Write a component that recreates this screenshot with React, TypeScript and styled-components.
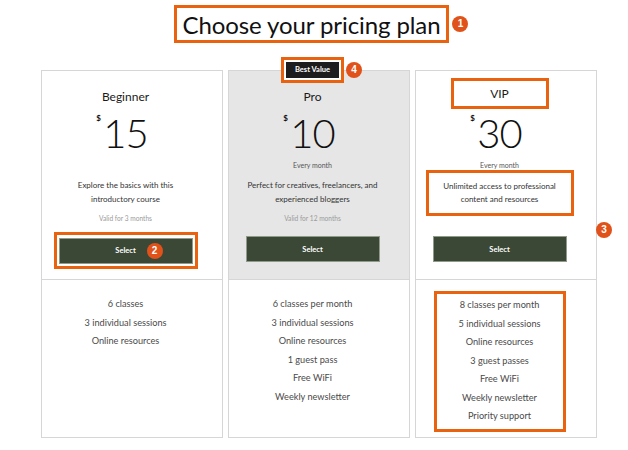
import styled, { createGlobalStyle } from "styled-components";

const GlobalStyle = createGlobalStyle`
  html, body {
    margin: 0;
    padding: 0;
    background: #ffffff;
  }
  body {
    font-family: "Lato", "Liberation Sans", sans-serif;
    color: #1a1a1a;
  }
`;

const Page = styled.div`
  width: 628px;
  height: 450px;
  position: relative;
  overflow: hidden;
  background: #fff;
`;

const TitleRow = styled.div`
  display: flex;
  justify-content: center;
  padding: 5px 5px 0 0;
  height: 70px;
  box-sizing: border-box;
`;

const Highlight = styled.div`
  position: relative;
  border: 3px solid #e8620f;
  box-sizing: border-box;
`;

const TitleBox = styled(Highlight)`
  height: 38px;
  padding: 0 6px;
  display: flex;
  align-items: center;
`;

const Title = styled.h1`
  margin: 0;
  font-family: "Lato", sans-serif;
  font-weight: 400;
  font-size: 24px;
  color: #111;
  letter-spacing: -0.1px;
`;

const Marker = styled.span<{ $top: number; $left?: number; $right?: number }>`
  position: absolute;
  top: ${(p) => p.$top}px;
  ${(p) => (p.$right !== undefined ? `right: ${p.$right}px;` : `left: ${p.$left}px;`)}
  width: 16px;
  height: 16px;
  border-radius: 50%;
  background: #e0521a;
  color: #fff;
  font-family: "Liberation Sans", sans-serif;
  font-weight: 700;
  font-size: 10px;
  line-height: 16px;
  text-align: center;
`;

const Grid = styled.div`
  display: grid;
  grid-template-columns: repeat(3, 182px);
  column-gap: 5px;
  margin-left: 41px;
`;

const Card = styled.div`
  position: relative;
  height: 368px;
  border: 1px solid #d6d6d6;
  box-sizing: border-box;
  display: flex;
  flex-direction: column;
`;

const Top = styled.div<{ $featured?: boolean }>`
  height: 209px;
  background: ${(p) => (p.$featured ? "#e6e6e6" : "#fff")};
  border-bottom: 1px solid #d6d6d6;
  padding: 18px 29px 0 16px;
  box-sizing: border-box;
  display: flex;
  flex-direction: column;
  align-items: center;
`;

const PlanName = styled.div`
  font-size: 12px;
  line-height: 16px;
  height: 16px;
  color: #1a1a1a;
  display: flex;
  align-items: center;
  justify-content: center;
`;

const VipBox = styled(Highlight)`
  width: 98px;
  height: 31px;
  margin-top: -11px;
  margin-bottom: -4px;
  display: flex;
  align-items: center;
  justify-content: center;
`;

const Price = styled.div`
  position: relative;
  margin-top: 8px;
  font-size: 40px;
  font-weight: 300;
  line-height: 40px;
  height: 44px;
  color: #111;
  letter-spacing: -1px;
`;

const Currency = styled.span`
  position: absolute;
  left: -7px;
  top: 0px;
  font-size: 8px;
  line-height: 10px;
  font-weight: 700;
  letter-spacing: 0;
`;

const Period = styled.div`
  margin-top: 3px;
  height: 10px;
  font-size: 7px;
  line-height: 10px;
  color: #555;
`;

const Description = styled.div`
  margin-top: 9px;
  height: 27px;
  font-size: 8px;
  line-height: 13.5px;
  color: #333;
  text-align: center;
  white-space: nowrap;
`;

const DescBox = styled(Highlight)`
  width: 148px;
  height: 46px;
  margin-top: 0px;
  margin-bottom: -10px;
  display: flex;
  align-items: center;
  justify-content: center;
  & > div {
    margin-top: 0;
  }
`;

const Valid = styled.div`
  margin-top: 7px;
  height: 10px;
  font-size: 6.6px;
  line-height: 10px;
  color: #9a9a9a;
`;

const SelectButton = styled.button`
  margin-top: 13px;
  width: 134px;
  height: 26px;
  background: #3c4836;
  color: #fff;
  border: 1px solid #8f9a8a;
  font-family: "Lato", sans-serif;
  font-weight: 700;
  font-size: 7.5px;
  cursor: pointer;
  padding: 0;
`;

const ButtonBox = styled(Highlight)`
  margin-top: 9px;
  padding: 2px;
  & > button {
    margin-top: 0;
  }
`;

const BestValue = styled(Highlight)`
  position: absolute;
  top: -14px;
  left: 52px;
  padding: 2px;
  background: #fff;
  z-index: 2;
`;

const BestLabel = styled.div`
  background: #1d1d1d;
  color: #fff;
  font-weight: 700;
  font-size: 7.5px;
  width: 53px;
  height: 16px;
  line-height: 16px;
  text-align: center;
`;

const Features = styled.ul`
  list-style: none;
  margin: 0;
  padding: 15px 29px 0 16px;
  display: flex;
  flex-direction: column;
  align-items: center;
`;

const FeatureBox = styled(Highlight)`
  margin-top: -4px;
  width: 132px;
  padding: 2px 0 3px;
  display: flex;
  flex-direction: column;
  align-items: center;
`;

const Feature = styled.li`
  font-family: "Lato", sans-serif;
  font-size: 9.2px;
  line-height: 18.5px;
  color: #4a4a4a;
  white-space: nowrap;
`;

const plans = [
  {
    name: "Beginner",
    price: "15",
    period: "",
    desc: ["Explore the basics with this", "introductory course"],
    valid: "Valid for 3 months",
    features: ["6 classes", "3 individual sessions", "Online resources"],
  },
  {
    name: "Pro",
    price: "10",
    period: "Every month",
    desc: ["Perfect for creatives, freelancers, and", "experienced bloggers"],
    valid: "Valid for 12 months",
    features: [
      "6 classes per month",
      "3 individual sessions",
      "Online resources",
      "1 guest pass",
      "Free WiFi",
      "Weekly newsletter",
    ],
  },
  {
    name: "VIP",
    price: "30",
    period: "Every month",
    desc: ["Unlimited access to professional", "content and resources"],
    valid: "",
    features: [
      "8 classes per month",
      "5 individual sessions",
      "Online resources",
      "3 guest passes",
      "Free WiFi",
      "Weekly newsletter",
      "Priority support",
    ],
  },
];

function App() {
  return (
    <Page>
      <GlobalStyle />
      <TitleRow>
        <TitleBox>
          <Title>Choose your pricing plan</Title>
          <Marker $top={8} $right={-22}>1</Marker>
        </TitleBox>
      </TitleRow>
      <Grid>
        {plans.map((plan, i) => {
          const vip = i === 2;
          const desc = (
            <Description>
              {plan.desc[0]}
              <br />
              {plan.desc[1]}
            </Description>
          );
          const list = plan.features.map((f) => <Feature key={f}>{f}</Feature>);
          return (
            <Card key={plan.name}>
              {i === 1 && (
                <BestValue>
                  <BestLabel>Best Value</BestLabel>
                  <Marker $top={2} $left={62}>4</Marker>
                </BestValue>
              )}
              <Top $featured={i === 1}>
                {vip ? (
                  <VipBox>
                    <PlanName>{plan.name}</PlanName>
                  </VipBox>
                ) : (
                  <PlanName>{plan.name}</PlanName>
                )}
                <Price>
                  <Currency>$</Currency>
                  {plan.price}
                </Price>
                <Period>{plan.period}</Period>
                {vip ? <DescBox>{desc}</DescBox> : desc}
                <Valid>{plan.valid}</Valid>
                {i === 0 ? (
                  <ButtonBox>
                    <SelectButton>Select</SelectButton>
                    <Marker $top={8} $left={90}>2</Marker>
                  </ButtonBox>
                ) : (
                  <SelectButton>Select</SelectButton>
                )}
              </Top>
              <Features>{vip ? <FeatureBox>{list}</FeatureBox> : list}</Features>
              {vip && <Marker $top={151} $left={180}>3</Marker>}
            </Card>
          );
        })}
      </Grid>
    </Page>
  );
}

export default App;
